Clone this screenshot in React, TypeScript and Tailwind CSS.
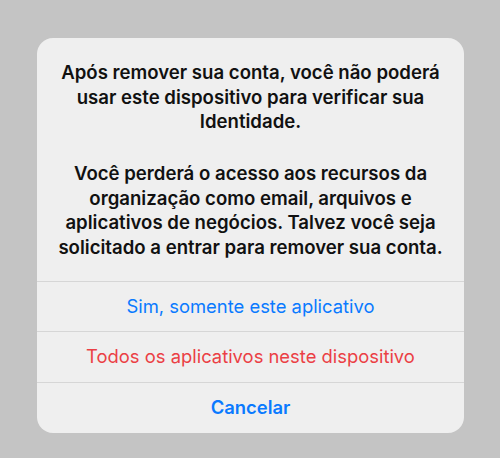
import React from 'react';

const RemoveAccountAlert: React.FC = () => {
  return (
    <div className="w-[500px] h-[458px] bg-[#c4c4c4] pt-[38px] pl-[37px] font-['Inter','Liberation_Sans',sans-serif]">
      <div className="w-[427px] rounded-[16px] bg-[#efefef] overflow-hidden">
        <div className="px-3 pt-[22px] pb-[22px] text-center text-[18.6px] leading-[24.5px] font-semibold text-[#111111]">
          <p>
            Após remover sua conta, você não poderá usar este dispositivo para
            verificar sua Identidade.
          </p>
          <p className="mt-[27.5px]">
            Você perderá o acesso aos recursos da organização como email,
            arquivos e aplicativos de negócios. Talvez você seja solicitado a
            entrar para remover sua conta.
          </p>
        </div>
        <button className="w-full h-[50px] border-t border-[#d6d6d6] text-[18.4px] text-[#0a7aff]">
          Sim, somente este aplicativo
        </button>
        <button className="w-full h-[51px] border-t border-[#d6d6d6] text-[18.4px] text-[#eb3f45]">
          Todos os aplicativos neste dispositivo
        </button>
        <button className="w-full h-[51px] border-t border-[#d6d6d6] text-[18.4px] font-semibold text-[#0a7aff]">
          Cancelar
        </button>
      </div>
    </div>
  );
};

export default function App() {
  return <RemoveAccountAlert />;
}
